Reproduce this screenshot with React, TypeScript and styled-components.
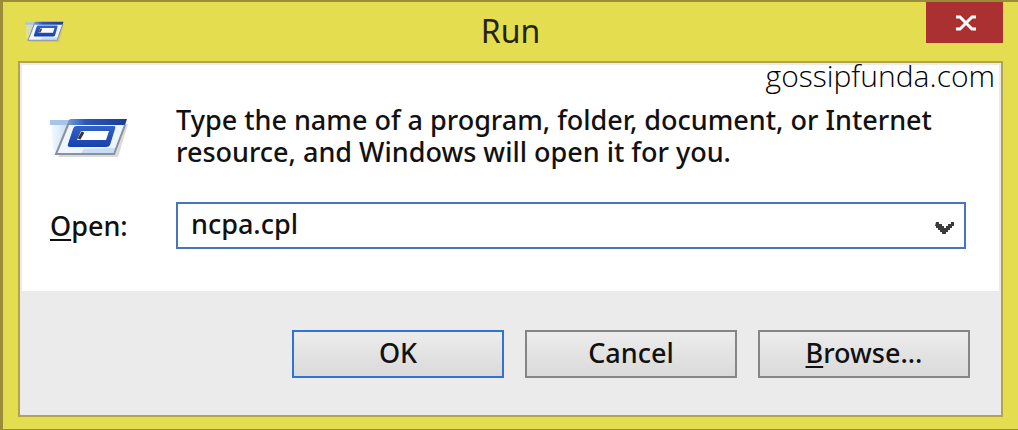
import React, { useState } from 'react';
import styled, { createGlobalStyle } from 'styled-components';

const GlobalStyle = createGlobalStyle`
  *, *::before, *::after { box-sizing: border-box; }
  body {
    margin: 0;
    background: #e5dd50;
    color: #111;
    font-family: 'Noto Sans', 'Open Sans', sans-serif;
  }
`;

const Window = styled.main`
  display: flex;
  flex-direction: column;
  min-height: 100vh;
  padding: 0 15px 12px;
  background: #e5dd50;
  border: solid #9a8c38;
  border-width: 2px 0 1px 3px;
`;

const TitleBar = styled.header`
  display: grid;
  grid-template-columns: 77px 1fr 77px;
  height: 59px;
`;

const TitleIcon = styled.span`
  padding: 17px 0 0 7px;
`;

const Title = styled.h1`
  margin: 0;
  color: #25250f;
  font-size: 32px;
  font-weight: 400;
  line-height: 58px;
  text-align: center;
`;

const CloseButton = styled.button`
  display: flex;
  align-items: center;
  justify-content: center;
  height: 41px;
  padding: 0 0 0 2px;
  border: 0;
  background: #ab3031;
`;

const Client = styled.section`
  position: relative;
  display: flex;
  flex: 1;
  flex-direction: column;
  border: 2px solid #b0a54a;
  background: #ebebeb;
`;

const Watermark = styled.span`
  position: absolute;
  top: -9px;
  right: 6px;
  color: #000;
  font-family: 'Open Sans', sans-serif;
  font-size: 30px;
  font-weight: 300;
  line-height: 44px;
`;

const Content = styled.div`
  display: grid;
  grid-template-columns: 126px 1fr;
  align-items: center;
  row-gap: 34px;
  margin: 2px 2px 0;
  padding: 39px 33px 42px 28px;
  background: #fff;
`;

const Message = styled.p`
  margin: 0;
  font-size: 27px;
  font-weight: 500;
  line-height: 32px;
`;

const Label = styled.label`
  font-size: 27px;
  font-weight: 500;
  line-height: 32px;
`;

const Key = styled.span`
  text-decoration: underline;
  text-decoration-thickness: 2px;
  text-underline-offset: 3px;
  text-decoration-skip-ink: none;
`;

const ComboBox = styled.div`
  display: flex;
  height: 47px;
  border: 2px solid #4677bd;
  background: #fff;
`;

const ComboInput = styled.input`
  flex: 1;
  min-width: 0;
  padding: 0 0 4px 13px;
  border: 0;
  outline: 0;
  background: transparent;
  color: #111;
  font: 500 27px/32px 'Noto Sans', 'Open Sans', sans-serif;
`;

const ComboToggle = styled.button`
  display: flex;
  align-items: center;
  justify-content: center;
  width: 38px;
  padding: 4px 0 0;
  border: 0;
  background: transparent;
`;

const Footer = styled.footer`
  display: flex;
  flex: 1;
  align-items: flex-start;
  justify-content: flex-end;
  gap: 21px;
  padding: 39px 31px 37px;
`;

const Button = styled.button<{ $primary?: boolean }>`
  width: 212px;
  height: 48px;
  padding: 0 0 2px;
  border: 2px solid ${({ $primary }) => ($primary ? '#2f73d6' : '#858585')};
  background: linear-gradient(#ececec, #dadada);
  color: #111;
  font: 500 27px/32px 'Noto Sans', 'Open Sans', sans-serif;
`;

const RunIcon = ({ width, height }: { width: number; height: number }) => (
  <svg width={width} height={height} viewBox="0 -3 80 45" preserveAspectRatio="none" aria-hidden="true">
    <defs>
      <linearGradient id="runBar" x1="0" x2="1">
        <stop offset="0" stopColor="#6f9be0" />
        <stop offset="0.3" stopColor="#2a57b8" />
        <stop offset="1" stopColor="#1c3e98" />
      </linearGradient>
      <linearGradient id="runField" x1="0" x2="0" y1="0" y2="1">
        <stop offset="0" stopColor="#3462c6" />
        <stop offset="1" stopColor="#1741ad" />
      </linearGradient>
      <linearGradient id="runTrail" x1="0" x2="1">
        <stop offset="0" stopColor="#d8e9fb" stopOpacity="0.3" />
        <stop offset="1" stopColor="#b9d3f2" />
      </linearGradient>
    </defs>
    <path d="M22 8 L78 7 L68 40 L8 40Z" fill="#a9a49b" opacity="0.4" />
    <path d="M1 7 L20 7 L7 37 L3 32Z" fill="url(#runTrail)" />
    <path d="M0 3 H22 L19 8 H0Z" fill="#a8c4ea" />
    <path d="M20 3 H76 L64 37 H6Z" fill="#eef5fd" />
    <path d="M34 32 L65 31 L63 36 H31Z" fill="#c8dcf5" />
    <path d="M20 2 H77 L75 8 H18Z" fill="url(#runBar)" />
    <path d="M20 3 L6 37 H64 L75 8" fill="none" stroke="#87919f" strokeWidth="2" />
    <path d="M26 9 H64 Q66 9 65 12 L60 28 Q59 30 56 30 H20 Q17 30 18 27 L23 12 Q24 9 26 9Z" fill="url(#runField)" />
    <path d="M31 14 H59 L56 23 H27Z" fill="#fff" />
    <path d="M33 15 L29 22" stroke="#34382f" strokeWidth="3" />
  </svg>
);

export default function App() {
  const [command, setCommand] = useState('ncpa.cpl');

  return (
    <>
      <GlobalStyle />
      <Window>
        <TitleBar>
          <TitleIcon>
            <RunIcon width={40} height={24} />
          </TitleIcon>
          <Title>Run</Title>
          <CloseButton type="button" aria-label="Close">
            <svg width="22" height="16" viewBox="0 0 22 16" aria-hidden="true">
              <path d="M1 2H5L17 14H21M1 14H5L17 2H21" fill="none" stroke="#fff" strokeWidth="3" />
            </svg>
          </CloseButton>
        </TitleBar>
        <Client>
          <Content>
            <RunIcon width={80} height={45} />
            <Message>
              Type the name of a program, folder, document, or Internet
              resource, and Windows will open it for you.
            </Message>
            <Label htmlFor="command">
              <Key>O</Key>pen:
            </Label>
            <ComboBox>
              <ComboInput
                id="command"
                type="text"
                value={command}
                onChange={(event) => setCommand(event.target.value)}
              />
              <ComboToggle type="button" aria-label="Show history">
                <svg width="20" height="14" viewBox="0 0 20 14" aria-hidden="true">
                  <path d="M1 1h3v2h3v2h2v2h2v-2h2v-2h3v-2h3v4h-2v2h-2v2h-2v2h-2v2h-4v-2h-2v-2h-2v-2h-2v-2h-1z" fill="#3b3b3b" />
                </svg>
              </ComboToggle>
            </ComboBox>
          </Content>
          <Footer>
            <Button type="submit" $primary>OK</Button>
            <Button type="button">Cancel</Button>
            <Button type="button">
              <Key>B</Key>rowse...
            </Button>
          </Footer>
          <Watermark>gossipfunda.com</Watermark>
        </Client>
      </Window>
    </>
  );
}
